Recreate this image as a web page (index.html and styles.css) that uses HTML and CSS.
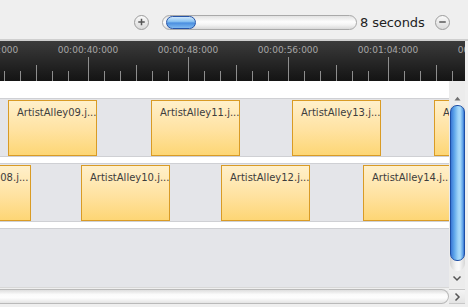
FILE: index.html
```html
<!DOCTYPE html>
<html>
<head>
    <meta charset="UTF-8">
    <title>Timeline</title>
    <link rel="stylesheet" href="styles.css">
</head>
<body>
    <div class="toolbar">
        <button class="zoom-btn" title="Zoom in">
            <svg width="14" height="14" viewBox="0 0 14 14"><path d="M3.5 7h7M7 3.5v7" stroke="#555" stroke-width="1.6"/></svg>
        </button>
        <div class="slider"><div class="slider-thumb"></div></div>
        <span class="zoom-label">8 seconds</span>
        <button class="zoom-btn" title="Zoom out">
            <svg width="14" height="14" viewBox="0 0 14 14"><path d="M3.5 7h7" stroke="#555" stroke-width="1.6"/></svg>
        </button>
    </div>

    <div class="ruler">
        <div class="ruler-labels">
            <span>00:00:32:000</span>
            <span>00:00:40:000</span>
            <span>00:00:48:000</span>
            <span>00:00:56:000</span>
            <span>00:01:04:000</span>
            <span>00:01:12:000</span>
        </div>
    </div>

    <div class="timeline">
        <div class="tracks">
            <div class="track">
                <div class="clip" style="left: 8px">ArtistAlley09.j...</div>
                <div class="clip" style="left: 151px">ArtistAlley11.j...</div>
                <div class="clip" style="left: 292px">ArtistAlley13.j...</div>
                <div class="clip" style="left: 434px">ArtistAlley15.j...</div>
            </div>
            <div class="track">
                <div class="clip clip-cut" style="left: -58px">ArtistAlley08.j...</div>
                <div class="clip" style="left: 81px">ArtistAlley10.j...</div>
                <div class="clip" style="left: 221px">ArtistAlley12.j...</div>
                <div class="clip" style="left: 363px">ArtistAlley14.j...</div>
            </div>
            <div class="track track-empty"></div>
        </div>
        <div class="vscroll">
            <div class="vscroll-up">
                <svg width="7" height="5" viewBox="0 0 7 5"><path d="M0.5 4.5L3.5 0.8L6.5 4.5Z" fill="#707070"/></svg>
            </div>
            <div class="vscroll-track"><div class="vscroll-thumb"></div></div>
            <div class="vscroll-down">
                <svg width="10" height="7" viewBox="0 0 10 7"><path d="M1.5 1.5L5 5L8.5 1.5" fill="none" stroke="#555" stroke-width="1.5"/></svg>
            </div>
        </div>
    </div>

    <div class="hscroll">
        <div class="hscroll-track"></div>
        <div class="hscroll-right">
            <svg width="7" height="10" viewBox="0 0 7 10"><path d="M1.5 1.5L5 5L1.5 8.5" fill="none" stroke="#555" stroke-width="1.5"/></svg>
        </div>
    </div>
</body>
</html>
```

FILE: styles.css
```css
body {
    margin: 0;
    width: 468px;
    height: 307px;
    overflow: hidden;
    background-color: #efefef;
    font-family: 'DejaVu Sans', 'Liberation Sans', sans-serif;
}

/* zoom toolbar */

.toolbar {
    display: flex;
    align-items: center;
    height: 34px;
    padding: 5px 0 0 134px;
    border-bottom: 2px solid #cfcfcf;
}

.zoom-btn {
    width: 15px;
    height: 15px;
    padding: 0;
    border: 1px solid #9c9c9c;
    border-radius: 50%;
    background: linear-gradient(#fafafa, #dadada);
    display: flex;
    align-items: center;
    justify-content: center;
}

.zoom-btn svg {
    display: block;
}

.slider {
    width: 187px;
    height: 13px;
    margin-left: 13px;
    padding: 0 3px;
    border: 1px solid #a9a9a9;
    border-radius: 8px;
    background: linear-gradient(#e2e2e2, #fdfdfd 45%, #f2f2f2 70%, #d8d8d8);
    display: flex;
    align-items: center;
}

.slider-thumb {
    width: 28px;
    height: 11px;
    border: 1px solid #2654a8;
    border-radius: 7px;
    background: linear-gradient(#cfe7fb, #8cc3f1 40%, #4b8fe0 55%, #7fb9f0 100%);
}

.zoom-label {
    margin: 0 10px 0 3px;
    font-size: 13px;
    color: #222;
    letter-spacing: -0.1px;
}

/* time ruler */

.ruler {
    height: 40px;
    margin-right: 3px;
    overflow: hidden;
    background:
        linear-gradient(to right, #8e8e8e 1px, transparent 1px) 88px 100% / 100px 24px repeat-x,
        linear-gradient(to right, #8e8e8e 1px, transparent 1px) 36px 100% / 100px 16px repeat-x,
        linear-gradient(to right, #8e8e8e 1px, transparent 1px) 4px 100% / 100px 10px repeat-x,
        linear-gradient(to right, #8e8e8e 1px, transparent 1px) 20px 100% / 100px 10px repeat-x,
        linear-gradient(to right, #8e8e8e 1px, transparent 1px) 52px 100% / 100px 10px repeat-x,
        linear-gradient(to right, #8e8e8e 1px, transparent 1px) 68px 100% / 100px 10px repeat-x,
        linear-gradient(#3b3b3b, #141414);
}

.ruler-labels {
    display: flex;
    margin-left: -62px;
    padding-top: 4px;
}

.ruler-labels span {
    flex: 0 0 100px;
    text-align: center;
    font-size: 9px;
    line-height: 11px;
    color: #a6a6a6;
}

/* tracks */

.timeline {
    display: flex;
    height: 207px;
    margin-right: 3px;
}

.tracks {
    width: 449px;
    padding-top: 17px;
    background-color: #fff;
}

.track {
    position: relative;
    height: 57px;
    margin-bottom: 6px;
    overflow: hidden;
    border-top: 1px solid #cfd0d4;
    border-bottom: 1px solid #cfd0d4;
    background-color: #e4e5e9;
}

.track-empty {
    height: 58px;
    margin-bottom: 0;
    border-bottom-color: #d8d8d8;
}

.clip {
    position: absolute;
    top: 1px;
    width: 79px;
    height: 48px;
    padding: 6px 0 0 8px;
    border: 1px solid #d99b25;
    background: linear-gradient(#fff0cb, #ffe2a0 55%, #fdd675);
    font-size: 10px;
    line-height: 12px;
    color: #3d3d3d;
    white-space: nowrap;
    overflow: hidden;
}

.clip-cut {
    text-align: right;
    padding: 6px 2px 0 6px;
    width: 79px;
}

/* scrollbars */

.vscroll {
    width: 16px;
    padding-top: 12px;
    display: flex;
    flex-direction: column;
    align-items: center;
    background-color: #ececec;
}

.vscroll-up {
    height: 10px;
    display: flex;
    align-items: center;
    justify-content: center;
}

.vscroll-track {
    width: 15px;
    height: 168px;
    border-radius: 8px;
    background: linear-gradient(to right, #d2d2d2, #f4f4f4 40%, #fafafa 60%, #d6d6d6);
    padding-top: 2px;
    box-sizing: border-box;
}

.vscroll-thumb {
    height: 154px;
    border: 1px solid #1e4fa6;
    border-radius: 7px;
    background: linear-gradient(to right, #3a78d6, #5ea6ea 25%, #9fd4f8 55%, #a8dbfa 70%, #5d9fe6 92%, #3370d0);
}

.vscroll-down {
    height: 14px;
    display: flex;
    align-items: center;
    justify-content: center;
}

.vscroll-down svg,
.vscroll-up svg,
.hscroll-right svg {
    display: block;
}

.hscroll {
    display: flex;
    height: 15px;
    margin: 1px 3px 0 0;
}

.hscroll-track {
    flex: 1;
    border: 1px solid #b9b9b9;
    border-left: none;
    border-radius: 0 8px 8px 0;
    background: linear-gradient(#dedede, #fbfbfb 35%, #fdfdfd 60%, #e4e4e4);
}

.hscroll-right {
    width: 16px;
    display: flex;
    align-items: center;
    justify-content: center;
    border-top: 1px solid #c8c8c8;
    border-bottom: 1px solid #c8c8c8;
    background: linear-gradient(#f4f4f4, #e4e4e4);
}
```
